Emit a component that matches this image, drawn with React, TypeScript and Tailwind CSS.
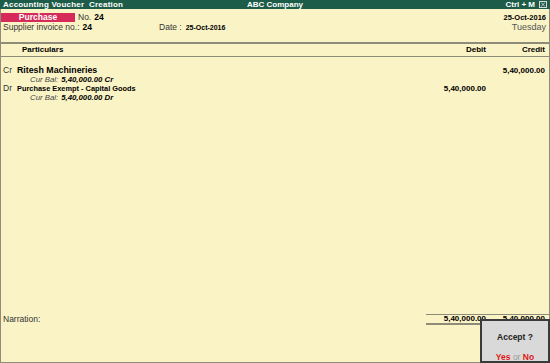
import React from "react";

const font = { fontFamily: '"Liberation Sans", Arial, sans-serif' };

function CloseBox() {
  return (
    <svg width="8" height="7" viewBox="0 0 8 7" className="ml-[4px]">
      <rect x="0.5" y="0.5" width="7" height="6" fill="#1d5c48" stroke="#d8d8d8" />
      <path d="M2.2 1.8 L5.8 5.2 M5.8 1.8 L2.2 5.2" stroke="#d8d8d8" strokeWidth="0.9" />
    </svg>
  );
}

function Entry({
  side,
  name,
  balance,
  debit,
  credit,
  nameSize,
}: {
  side: string;
  name: string;
  balance: string;
  debit?: string;
  credit?: string;
  nameSize: string;
}) {
  return (
    <>
      <div className="grid grid-cols-[1fr_60px_63px] h-[9px] items-center leading-none">
        <div className="flex items-center pl-[2px]">
          <span className="w-[14px] text-[8.5px] text-[#333]">{side}</span>
          <span className={`${nameSize} font-bold text-black`}>{name}</span>
        </div>
        <div className="text-right text-[8px] font-bold text-black">{debit}</div>
        <div className="text-right text-[8px] font-bold text-black pr-[4px]">{credit}</div>
      </div>
      <div className="h-[9px] flex items-center leading-none pl-[29px] italic">
        <span className="text-[7.8px] text-[#444]">Cur Bal:</span>
        <span className="ml-[3px] text-[7.8px] font-bold text-black">{balance}</span>
      </div>
    </>
  );
}

export default function App() {
  return (
    <div
      className="relative w-[550px] h-[363px] overflow-hidden flex flex-col bg-[#faf3c6] select-none"
      style={font}
    >
      {/* title bar */}
      <div className="h-[9px] grid grid-cols-[1fr_auto_1fr] items-center bg-[#1d5c48] text-white text-[8px] font-bold leading-none px-[3px]">
        <span className="tracking-[0.2px]">Accounting Voucher&nbsp; Creation</span>
        <span>ABC Company</span>
        <span className="flex items-center justify-end">
          Ctrl + M
          <CloseBox />
        </span>
      </div>

      <div className="flex-1 flex flex-col border-l border-r border-b border-[#8e8c78]">
        {/* voucher header */}
        <div className="pt-[4px] flex flex-col">
          <div className="h-[9px] flex items-center leading-none">
            <div className="w-[74px] h-[9px] bg-[#d52a5a] flex items-center justify-center text-white text-[8.5px] font-bold">
              Purchase
            </div>
            <span className="ml-[3px] text-[8.5px] text-[#333]">No.</span>
            <span className="ml-[3px] text-[8.5px] font-bold text-black">24</span>
            <span className="ml-auto pr-[3px] text-[7.5px] font-bold text-black">25-Oct-2016</span>
          </div>
          <div className="h-[10px] flex items-center leading-none pl-[2px]">
            <span className="text-[8.5px] text-[#333]">Supplier invoice no.:</span>
            <span className="ml-[3px] text-[8.5px] font-bold text-black">24</span>
            <span className="ml-[67px] text-[8.5px] text-[#333]">Date&nbsp;:</span>
            <span className="ml-[4px] text-[7px] font-bold text-black">25-Oct-2016</span>
            <span className="ml-auto pr-[3px] text-[9px] text-[#555]">Tuesday</span>
          </div>
        </div>

        {/* column header */}
        <div className="mt-[10px] border-t-2 border-b border-[#8e8c78] h-[15px] grid grid-cols-[1fr_60px_63px] items-center leading-none text-[8px] font-bold text-black">
          <span className="pl-[21px]">Particulars</span>
          <span className="text-right">Debit</span>
          <span className="text-right pr-[4px]">Credit</span>
        </div>

        {/* entries */}
        <div className="pt-[9px] flex flex-col">
          <Entry
            side="Cr"
            name="Ritesh Machineries"
            nameSize="text-[8.8px]"
            balance="5,40,000.00 Cr"
            credit="5,40,000.00"
          />
          <Entry
            side="Dr"
            name="Purchase Exempt - Capital Goods"
            nameSize="text-[7.4px]"
            balance="5,40,000.00 Dr"
            debit="5,40,000.00"
          />
        </div>

        <div className="flex-1" />

        {/* narration and totals */}
        <div className="grid grid-cols-[1fr_123px] items-stretch leading-none">
          <div className="flex items-center pl-[2px] text-[8.5px] text-[#333]">Narration:</div>
          <div className="border-t border-b-2 border-[#8e8c78] h-[11px] grid grid-cols-[60px_63px] items-center text-[8px] font-bold text-black">
            <span className="text-right">5,40,000.00</span>
            <span className="text-right pr-[4px]">5,40,000.00</span>
          </div>
        </div>
        <div className="h-[37px]" />
      </div>

      {/* accept dialog */}
      <div className="absolute right-0 bottom-0 w-[70px] h-[44px] bg-[#d9d9d9] border-2 border-[#3a3a3a] flex flex-col items-center leading-none">
        <span className="mt-[12px] text-[8.5px] font-bold text-[#222]">Accept ?</span>
        <span className="mt-[11px] text-[8.5px]">
          <span className="font-bold text-[#e01818]">Yes</span>
          <span className="text-[#999]"> or </span>
          <span className="font-bold text-[#e01818]">No</span>
        </span>
      </div>
    </div>
  );
}
